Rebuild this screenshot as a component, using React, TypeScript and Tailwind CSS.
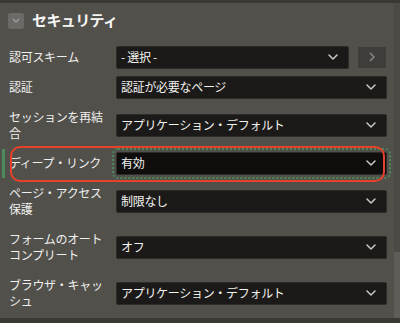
import React from "react";

const Chevron = () => (
  <svg width="10" height="6" viewBox="0 0 10 6" className="shrink-0">
    <polyline points="1,1 5,5 9,1" fill="none" stroke="#c9c9c6" strokeWidth="1.5" strokeLinecap="round" strokeLinejoin="round" />
  </svg>
);

const Select = ({ text, dark, extra }: { text: string; dark?: boolean; extra?: string }) => (
  <div
    className={`flex h-[23px] items-center justify-between rounded-[2px] border border-[#2c2b28] pl-[4px] pr-[10px] text-[12px] text-[#f3f3f1] ${
      dark ? "bg-[#0f0e0d]" : "bg-[#1b1a18]"
    } ${extra ?? ""}`}
  >
    <span className="leading-[16px] tracking-[-0.3px]">{text}</span>
    <Chevron />
  </div>
);

const Label = ({ children }: { children: React.ReactNode }) => (
  <div className="w-[107px] shrink-0 py-[7px] text-[12px] leading-[16px] tracking-[-0.3px] text-[#efefed]">{children}</div>
);

const Row = ({ label, text }: { label: React.ReactNode; text: string }) => (
  <div className="flex items-center pl-[9px] pr-[7px]">
    <Label>{label}</Label>
    <Select text={text} extra="flex-1" />
  </div>
);

export default function App() {
  return (
    <div
      className="flex h-[323px] w-[400px] flex-col overflow-hidden bg-[#3b3936] pt-[3px]"
      style={{ fontFamily: '"Noto Sans CJK JP", "Noto Sans", sans-serif' }}
    >
      <div className="flex flex-1 min-h-0">
        <div className="flex-1 bg-[#51504b]">
          {/* header */}
          <div className="flex h-[35px] items-center gap-[8px] pl-[8px]">
            <div className="flex h-[16px] w-[16px] items-center justify-center rounded-[2px] bg-[#6b6a66]">
              <svg width="8" height="5" viewBox="0 0 8 5">
                <polyline points="1,1 4,4 7,1" fill="none" stroke="#a3a29e" strokeWidth="1.2" />
              </svg>
            </div>
            <span className="text-[15px] font-bold tracking-[-0.6px] text-[#f5f5f3]">セキュリティ</span>
          </div>

          <div className="pt-[4px]">
            {/* row 1 */}
            <div className="flex items-center pl-[9px] pr-[8px]">
              <Label>認可スキーム</Label>
              <Select text="- 選択 -" extra="flex-1" />
              <div className="ml-[9px] flex h-[21px] w-[28px] items-center justify-center bg-[#3f3e3b]">
                <svg width="6" height="10" viewBox="0 0 6 10">
                  <polyline points="1,1 5,5 1,9" fill="none" stroke="#8d8c88" strokeWidth="1.4" />
                </svg>
              </div>
            </div>
            <Row label="認証" text="認証が必要なページ" />
            <Row label={<>セッションを再結<br />合</>} text="アプリケーション・デフォルト" />

            {/* row 4 highlighted */}
            <div className="relative flex items-center pl-[9px] pr-[7px]">
              <div className="absolute left-[2px] top-[1px] bottom-[0px] w-[3px] bg-[#4e8a5b]" />
              <Label>ディープ・リンク</Label>
              <Select text="有効" dark extra="flex-1 outline-2 outline-dotted outline-offset-[2px] outline-[#4a8a5c]" />
              <div className="pointer-events-none absolute left-[10px] top-[-2px] h-[36px] w-[375px] rounded-[10px] border-2 border-[#e8412b]" />
            </div>

            <Row label={<>ページ・アクセス<br />保護</>} text="制限なし" />
            <Row label={<>フォームのオート<br />コンプリート</>} text="オフ" />
            <Row label={<>ブラウザ・キャッ<br />シュ</>} text="アプリケーション・デフォルト" />
          </div>
        </div>
        <div className="flex w-[6px] flex-col bg-[#4b4a46]">
          <div className="flex-1" />
          <div className="h-[66px] bg-[#5e5d58]" />
        </div>
      </div>
      <div className="h-[5px] bg-[#3b3936]" />
    </div>
  );
}
